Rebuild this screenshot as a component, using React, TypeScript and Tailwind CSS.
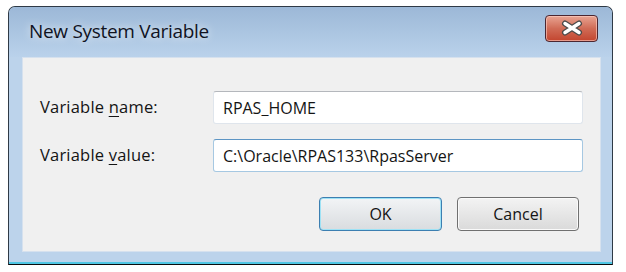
export default function App() {
  const font = { fontFamily: '"Open Sans", "Noto Sans", Arial, sans-serif' };

  return (
    <div className="min-h-screen w-[626px] h-[272px] bg-white pl-[8px] pt-[6px]" style={font}>
      {/* window frame */}
      <div className="flex h-[259px] w-[605px] flex-col rounded-t-[7px] border border-[#2f3a46] border-b-[#0b0b0b] bg-[#bcd3eb]">
        {/* title bar */}
        <div className="flex h-[50px] items-center justify-between rounded-t-[6px] bg-gradient-to-b from-[#9cb8d7] to-[#bad2eb] pl-[20px] pr-[14px]">
          <span className="text-[19px] leading-none text-[#10131f] tracking-[-0.3px] [text-shadow:0_0_8px_rgba(255,255,255,0.9)] -mt-[2px]">
            New System Variable
          </span>
          <CloseButton />
        </div>

        {/* client area */}
        <div className="flex flex-1 pl-[13px] pr-[11px]">
          <div className="flex h-[195px] w-[579px] flex-col border border-[#d6e1ee] bg-[#f0f0f0] pl-[17px] pr-[17px] pt-[33px]">
            <div className="flex flex-col gap-[15px]">
              <Row label="Variable " access="n" rest="ame:" value="RPAS_HOME" />
              <Row label="Variable " access="v" rest="alue:" value="C:\Oracle\RPAS133\RpasServer" focused />
            </div>

            <div className="mt-[25px] flex justify-end gap-[15px] pr-[4px]">
              <button className="h-[34px] w-[123px] rounded-[4px] border border-[#3c7fb1] bg-gradient-to-b from-[#f2f4f6] to-[#d9dcdf] text-[16px] text-[#141414] shadow-[inset_0_0_0_1px_#9ee2f5]">
                OK
              </button>
              <button className="h-[34px] w-[122px] rounded-[4px] border border-[#707070] bg-gradient-to-b from-[#f3f3f3] to-[#dadada] text-[16px] text-[#141414] shadow-[inset_0_0_0_1px_#fafafa]">
                Cancel
              </button>
            </div>
          </div>
        </div>

        {/* bottom frame */}
        <div className="mt-auto h-[12px] border-b-2 border-[#4fc6e3]" />
      </div>
    </div>
  );
}

function Row({
  label,
  access,
  rest,
  value,
  focused,
}: {
  label: string;
  access: string;
  rest: string;
  value: string;
  focused?: boolean;
}) {
  return (
    <div className="flex items-center">
      <span className="w-[173px] text-[16.5px] tracking-[0.2px] text-[#141414]">
        {label}
        <span className="underline underline-offset-[3px]">{access}</span>
        {rest}
      </span>
      <div
        className={
          focused
            ? "flex h-[33px] w-[370px] items-center rounded-[3px] border border-[#a6c8e2] border-t-[#5d95c4] bg-white pl-[9px] text-[16px] text-[#141414]"
            : "flex h-[33px] w-[370px] items-center rounded-[3px] border border-[#dfe5ec] border-t-[#b4b7bc] bg-white pl-[9px] text-[16px] text-[#141414]"
        }
      >
        {value}
      </div>
    </div>
  );
}

function CloseButton() {
  return (
    <div className="mt-[-8px] flex h-[27px] w-[53px] items-center justify-center rounded-[4px] border border-[#4b2630] bg-gradient-to-b from-[#e8a492] via-[#d06b56] to-[#c2442e] shadow-[inset_0_0_0_1px_rgba(255,210,200,0.6)]">
      <svg width="24" height="16" viewBox="0 0 24 16">
        <path d="M5 3.5 L19 12.5 M19 3.5 L5 12.5" stroke="#4a4a4a" strokeWidth="6" strokeLinecap="round" />
        <path d="M5 3.5 L19 12.5 M19 3.5 L5 12.5" stroke="#ffffff" strokeWidth="3.5" strokeLinecap="round" />
      </svg>
    </div>
  );
}
